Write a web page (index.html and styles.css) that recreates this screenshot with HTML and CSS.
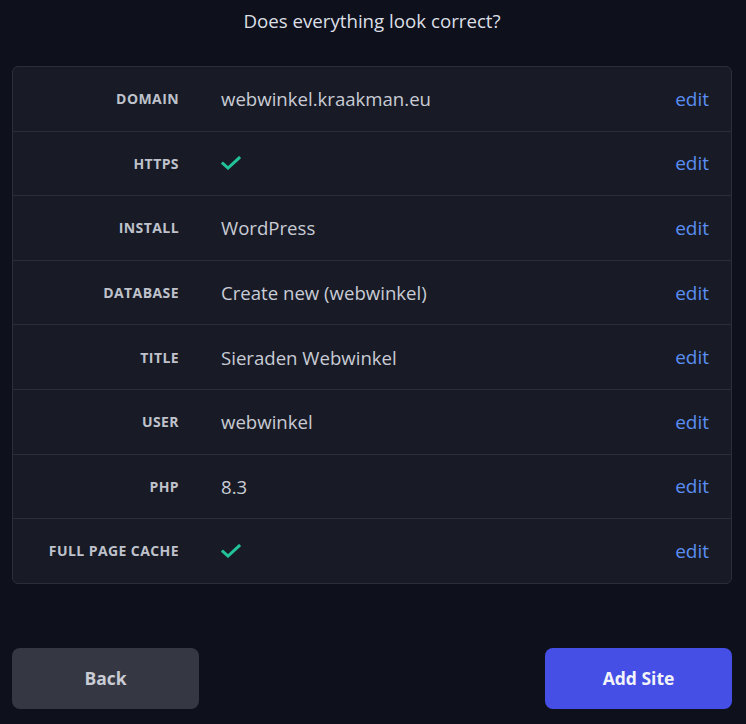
FILE: index.html
```html
<!DOCTYPE html>
<html lang="nl">
<head>
<meta charset="utf-8">
<title>Review</title>
<link rel="stylesheet" href="styles.css">
</head>
<body>
<div class="page">
  <h1 class="heading">Does everything look correct?</h1>
  <div class="card">
    <div class="row"><div class="label">Domain</div><div class="value">webwinkel.kraakman.eu</div><a class="edit" href="#">edit</a></div>
    <div class="row"><div class="label">HTTPS</div><div class="value"><svg class="check" viewBox="0 0 20 14" width="20" height="14"><path d="M2 7.5 L7 12 L18 2" fill="none" stroke="currentColor" stroke-width="3" stroke-linecap="square" stroke-linejoin="miter"/></svg></div><a class="edit" href="#">edit</a></div>
    <div class="row"><div class="label">Install</div><div class="value">WordPress</div><a class="edit" href="#">edit</a></div>
    <div class="row"><div class="label">Database</div><div class="value">Create new (webwinkel)</div><a class="edit" href="#">edit</a></div>
    <div class="row"><div class="label">Title</div><div class="value">Sieraden Webwinkel</div><a class="edit" href="#">edit</a></div>
    <div class="row"><div class="label">User</div><div class="value">webwinkel</div><a class="edit" href="#">edit</a></div>
    <div class="row"><div class="label">PHP</div><div class="value">8.3</div><a class="edit" href="#">edit</a></div>
    <div class="row"><div class="label">Full page cache</div><div class="value"><svg class="check" viewBox="0 0 20 14" width="20" height="14"><path d="M2 7.5 L7 12 L18 2" fill="none" stroke="currentColor" stroke-width="3" stroke-linecap="square" stroke-linejoin="miter"/></svg></div><a class="edit" href="#">edit</a></div>
  </div>
  <div class="actions">
    <button class="btn btn-back">Back</button>
    <button class="btn btn-primary">Add Site</button>
  </div>
</div>
</body>
</html>
```

FILE: styles.css
```css
html, body {
  margin: 0;
  padding: 0;
  background: #0e111b;
  font-family: "Open Sans", "Noto Sans", sans-serif;
  color: #d3d6de;
}
.page {
  padding: 0 12px;
  width: 720px;
  box-sizing: content-box;
}
.heading {
  margin: 0;
  height: 66px;
  padding-top: 8px;
  box-sizing: border-box;
  font-size: 18.7px;
  line-height: 26px;
  font-weight: 400;
  text-align: center;
  color: #dcdfe6;
}
.card {
  background: #181b26;
  border: 1px solid #2a2e3a;
  border-radius: 6px;
}
.row {
  display: grid;
  grid-template-columns: 166px 1fr auto;
  column-gap: 42px;
  align-items: center;
  height: 63.6px;
  padding-right: 22px;
  border-top: 1px solid #2a2e3a;
}
.row:first-child {
  border-top: none;
}
.label {
  text-align: right;
  font-size: 14px;
  font-weight: 700;
  text-transform: uppercase;
  letter-spacing: 0.03em;
  color: #bfc2cb;
}
.value {
  font-size: 18.6px;
  color: #c9ccd5;
  display: flex;
  align-items: center;
}
.check {
  color: #22c39a;
  display: block;
}
.edit {
  font-size: 19px;
  font-weight: 500;
  color: #5b8ef2;
  text-decoration: none;
}
.actions {
  display: flex;
  justify-content: space-between;
  margin-top: 64px;
}
.btn {
  width: 187px;
  height: 61px;
  border: none;
  border-radius: 8px;
  font-family: "Open Sans", "Noto Sans", sans-serif;
  font-size: 17.5px;
  font-weight: 700;
}
.btn-back {
  background: #353843;
  color: #c9ccd5;
}
.btn-primary {
  background: #454fe6;
  color: #f3f4fa;
}
```
